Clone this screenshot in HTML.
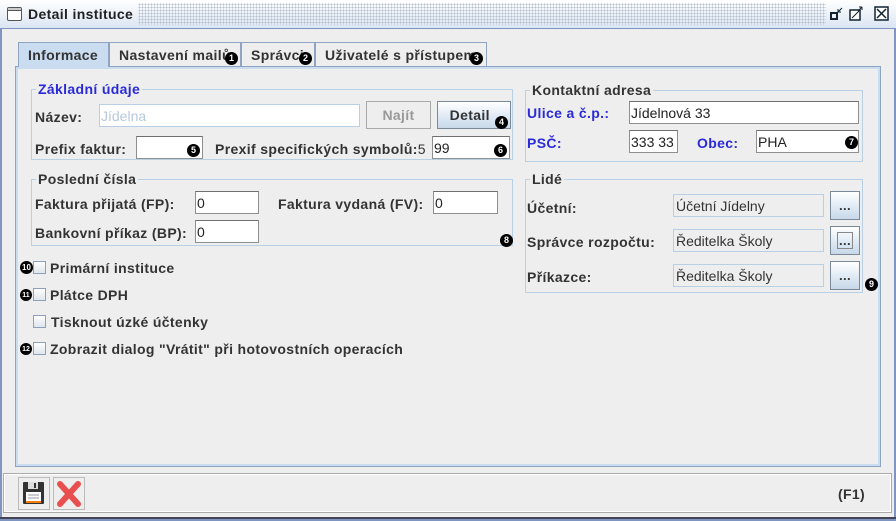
<!DOCTYPE html>
<html><head><meta charset="utf-8">
<style>
*{margin:0;padding:0;box-sizing:border-box}
body{width:896px;height:521px;overflow:hidden;background:#eeeeee;font-family:"Liberation Sans",Arial,sans-serif;font-size:13px;font-weight:bold;color:#333;position:relative;letter-spacing:0.35px}
.a{position:absolute;white-space:nowrap}
.inp{position:absolute;background:#fff;border:1px solid #8e8f8f;border-top-color:#6f6f6f;font-weight:normal;font-size:14px;padding:2px 0 0 1px;color:#222;line-height:18px;letter-spacing:0}
.ro{position:absolute;background:#eeeeee;border:1px solid #b8cfe5;font-weight:normal;font-size:14px;padding:3px 0 0 2px;color:#333;letter-spacing:0}
.grp{position:absolute;border:1px solid #b8cfe5}
.gt{position:absolute;background:#eeeeee;padding:0 2px;top:-8px;left:4px;font-size:14px;line-height:14px}
.btn{position:absolute;border:1px solid #7a8a99;background:linear-gradient(#ffffff,#dce8f4 60%,#c8d8e8);text-align:center}
.b{position:absolute;width:13px;height:13px;border-radius:50%;background:#000;color:#fff;font-size:9px;line-height:13px;text-align:center;font-weight:bold;letter-spacing:0}
.cb{position:absolute;width:13px;height:13px;border:1px solid #8ca0b8;background:linear-gradient(#fdfdfd,#dfe6ee)}
.tab{position:absolute;top:42px;height:24px;border:1px solid #8ea4c0;border-bottom:none;background:#eeeeee;padding:4px 0 0 9px;font-size:14px}
</style></head><body>
<div class="a" style="left:0;top:0;width:896px;height:521px;border:2px solid #7e95c2;border-top:none"></div>
<div class="a" style="left:0;top:0;width:896px;height:29px;background:linear-gradient(#ffffff,#dbe5f3);border-bottom:1px solid #7e95c2"></div>
<div class="a" style="left:138px;top:3px;width:688px;height:22px;background-image:radial-gradient(#b5bfcc 0.8px,transparent 1px);background-size:3px 3px"></div>
<div class="a" style="left:7px;top:7px;width:15px;height:14px;border:1px solid #555;border-radius:2px;background:#fff"><div style="height:3px;border-bottom:1px solid #555;background:#ccc"></div></div>
<div class="a" style="left:28px;top:6px;font-size:14px;color:#222">Detail instituce</div>
<svg class="a" style="left:828px;top:4px" width="64" height="20"><rect x="3" y="9" width="6" height="6" fill="none" stroke="#123" stroke-width="2"/><path d="M10 8 L14 4 M10 8h3M10 8v-3" stroke="#123" fill="none"/><rect x="22" y="6" width="10" height="10" fill="#fff" stroke="#123" stroke-width="1.5"/><path d="M24 14 L31 7 M34 3 L30 7 M34 3h-3M34 3v3" stroke="#123" fill="none"/><rect x="47" y="3" width="13" height="13" fill="#fff" stroke="#123" stroke-width="1.5"/><path d="M49 5 L58 14 M58 5 L49 14" stroke="#123" stroke-width="1.5"/></svg>
<div class="tab" style="left:18px;width:91px;background:#c9dcf0;border-color:#8ea4c0;z-index:2;height:25px">Informace</div>
<div class="tab" style="left:109px;width:132px">Nastavení mailů</div><div class="b" style="left:225px;top:52px">1</div>
<div class="tab" style="left:241px;width:74px">Správci</div><div class="b" style="left:299px;top:52px">2</div>
<div class="tab" style="left:315px;width:172px">Uživatelé s přístupem</div><div class="b" style="left:470px;top:52px">3</div>
<div class="a" style="left:15px;top:66px;width:866px;height:401px;border:1px solid #8ea4c0;box-shadow:inset 0 0 0 2px #c9dcf0"></div>
<div class="grp" style="left:31px;top:89px;width:482px;height:71px"><div class="gt" style="color:#2a2ad8">Základní údaje</div></div>
<div class="a" style="left:35px;top:109px;font-size:14px">Název:</div>
<div class="inp" style="left:99px;top:104px;width:261px;height:23px;color:#b8c8dc;border-color:#b8cfe5">Jídelna</div>
<div class="a" style="left:366px;top:101px;width:65px;height:28px;border:1px solid #aaa;color:#999;text-align:center;line-height:26px;font-size:14px">Najít</div>
<div class="btn" style="left:437px;top:101px;width:74px;height:28px;line-height:26px;font-size:14px">Detail&nbsp;&nbsp;</div><div class="b" style="left:495px;top:116px">4</div>
<div class="a" style="left:35px;top:141px;font-size:14px">Prefix faktur:</div>
<div class="inp" style="left:136px;top:136px;width:67px;height:23px"></div><div class="b" style="left:187px;top:144px">5</div>
<div class="a" style="left:215px;top:141px;font-size:14px">Prexif specifických symbolů:<span style="font-weight:normal">5</span></div>
<div class="inp" style="left:432px;top:136px;width:78px;height:23px">99</div><div class="b" style="left:494px;top:144px">6</div>
<div class="grp" style="left:31px;top:179px;width:482px;height:67px"><div class="gt">Poslední čísla</div></div>
<div class="a" style="left:35px;top:196px;font-size:14px">Faktura přijatá (FP):</div>
<div class="inp" style="left:195px;top:191px;width:64px;height:23px">0</div>
<div class="a" style="left:278px;top:196px;font-size:14px">Faktura vydaná (FV):</div>
<div class="inp" style="left:433px;top:191px;width:65px;height:23px">0</div>
<div class="a" style="left:35px;top:225px;font-size:14px">Bankovní příkaz (BP):</div>
<div class="inp" style="left:195px;top:220px;width:64px;height:23px">0</div>
<div class="b" style="left:500px;top:234px">8</div>
<div class="grp" style="left:525px;top:90px;width:338px;height:72px"><div class="gt">Kontaktní adresa</div></div>
<div class="a" style="left:527px;top:105px;font-size:14px;color:#2a2ad8">Ulice a č.p.:</div>
<div class="inp" style="left:629px;top:101px;width:230px;height:23px">Jídelnová 33</div>
<div class="a" style="left:527px;top:135px;font-size:14px;color:#2a2ad8">PSČ:</div>
<div class="inp" style="left:629px;top:130px;width:49px;height:23px">333 33</div>
<div class="a" style="left:697px;top:135px;font-size:14px;color:#2a2ad8">Obec:</div>
<div class="inp" style="left:756px;top:130px;width:103px;height:23px">PHA</div><div class="b" style="left:845px;top:136px">7</div>
<div class="grp" style="left:525px;top:179px;width:338px;height:114px"><div class="gt">Lidé</div></div>
<div class="a" style="left:527px;top:200px;font-size:14px">Účetní:</div>
<div class="ro" style="left:673px;top:194px;width:151px;height:23px">Účetní Jídelny</div>
<div class="btn" style="left:830px;top:191px;width:30px;height:29px;line-height:28px">...</div>
<div class="a" style="left:527px;top:234px;font-size:14px">Správce rozpočtu:</div>
<div class="ro" style="left:673px;top:229px;width:151px;height:23px">Ředitelka Školy</div>
<div class="btn" style="left:830px;top:226px;width:30px;height:29px;line-height:28px"><span style="border:1px solid #888;padding:0 1px">...</span></div>
<div class="a" style="left:527px;top:269px;font-size:14px">Příkazce:</div>
<div class="ro" style="left:673px;top:264px;width:151px;height:23px">Ředitelka Školy</div>
<div class="btn" style="left:830px;top:261px;width:30px;height:29px;line-height:28px">...</div>
<div class="b" style="left:865px;top:278px">9</div>
<div class="b" style="left:20px;top:261px;font-size:8px">10</div><div class="cb" style="left:33px;top:261px"></div><div class="a" style="left:50px;top:260px;font-size:14px">Primární instituce</div>
<div class="b" style="left:20px;top:289px;font-size:7px;width:12px;height:12px">11</div><div class="cb" style="left:33px;top:288px"></div><div class="a" style="left:50px;top:287px;font-size:14px">Plátce DPH</div>
<div class="cb" style="left:33px;top:315px"></div><div class="a" style="left:51px;top:314px;font-size:14px">Tisknout úzké účtenky</div>
<div class="b" style="left:20px;top:343px;font-size:7px;width:12px;height:12px">12</div><div class="cb" style="left:33px;top:342px"></div><div class="a" style="left:50px;top:341px;font-size:14px">Zobrazit dialog "Vrátit" při hotovostních operacích</div>
<div class="a" style="left:3px;top:473px;width:889px;height:40px;border:1px solid #aaa;box-shadow:inset 0 0 0 1px #fff"></div>
<div class="a" style="left:18px;top:477px;width:32px;height:33px;border:1px solid #bbb"></div>
<svg class="a" style="left:22px;top:481px" width="24" height="25"><rect x="1" y="1" width="21" height="22" rx="1" fill="#333"/><rect x="6" y="1" width="10" height="7" fill="#ddd"/><rect x="12" y="2" width="2" height="5" fill="#333"/><rect x="4" y="11" width="15" height="11" fill="#fff"/><path d="M6 14h11M6 17h11" stroke="#99a"/><rect x="4" y="20" width="15" height="2" fill="#f08010"/></svg>
<div class="a" style="left:53px;top:477px;width:32px;height:33px;border:1px solid #bbb"></div>
<svg class="a" style="left:56px;top:481px" width="26" height="26"><path d="M4 3 L22 23 M22 3 L4 23" stroke="#e85050" stroke-width="6" stroke-linecap="round"/></svg>
<div class="a" style="left:838px;top:486px;font-size:14px">(F1)</div>
<div class="a" style="left:0;top:517px;width:896px;height:4px;border-top:2px solid #445"></div>
</body></html>
